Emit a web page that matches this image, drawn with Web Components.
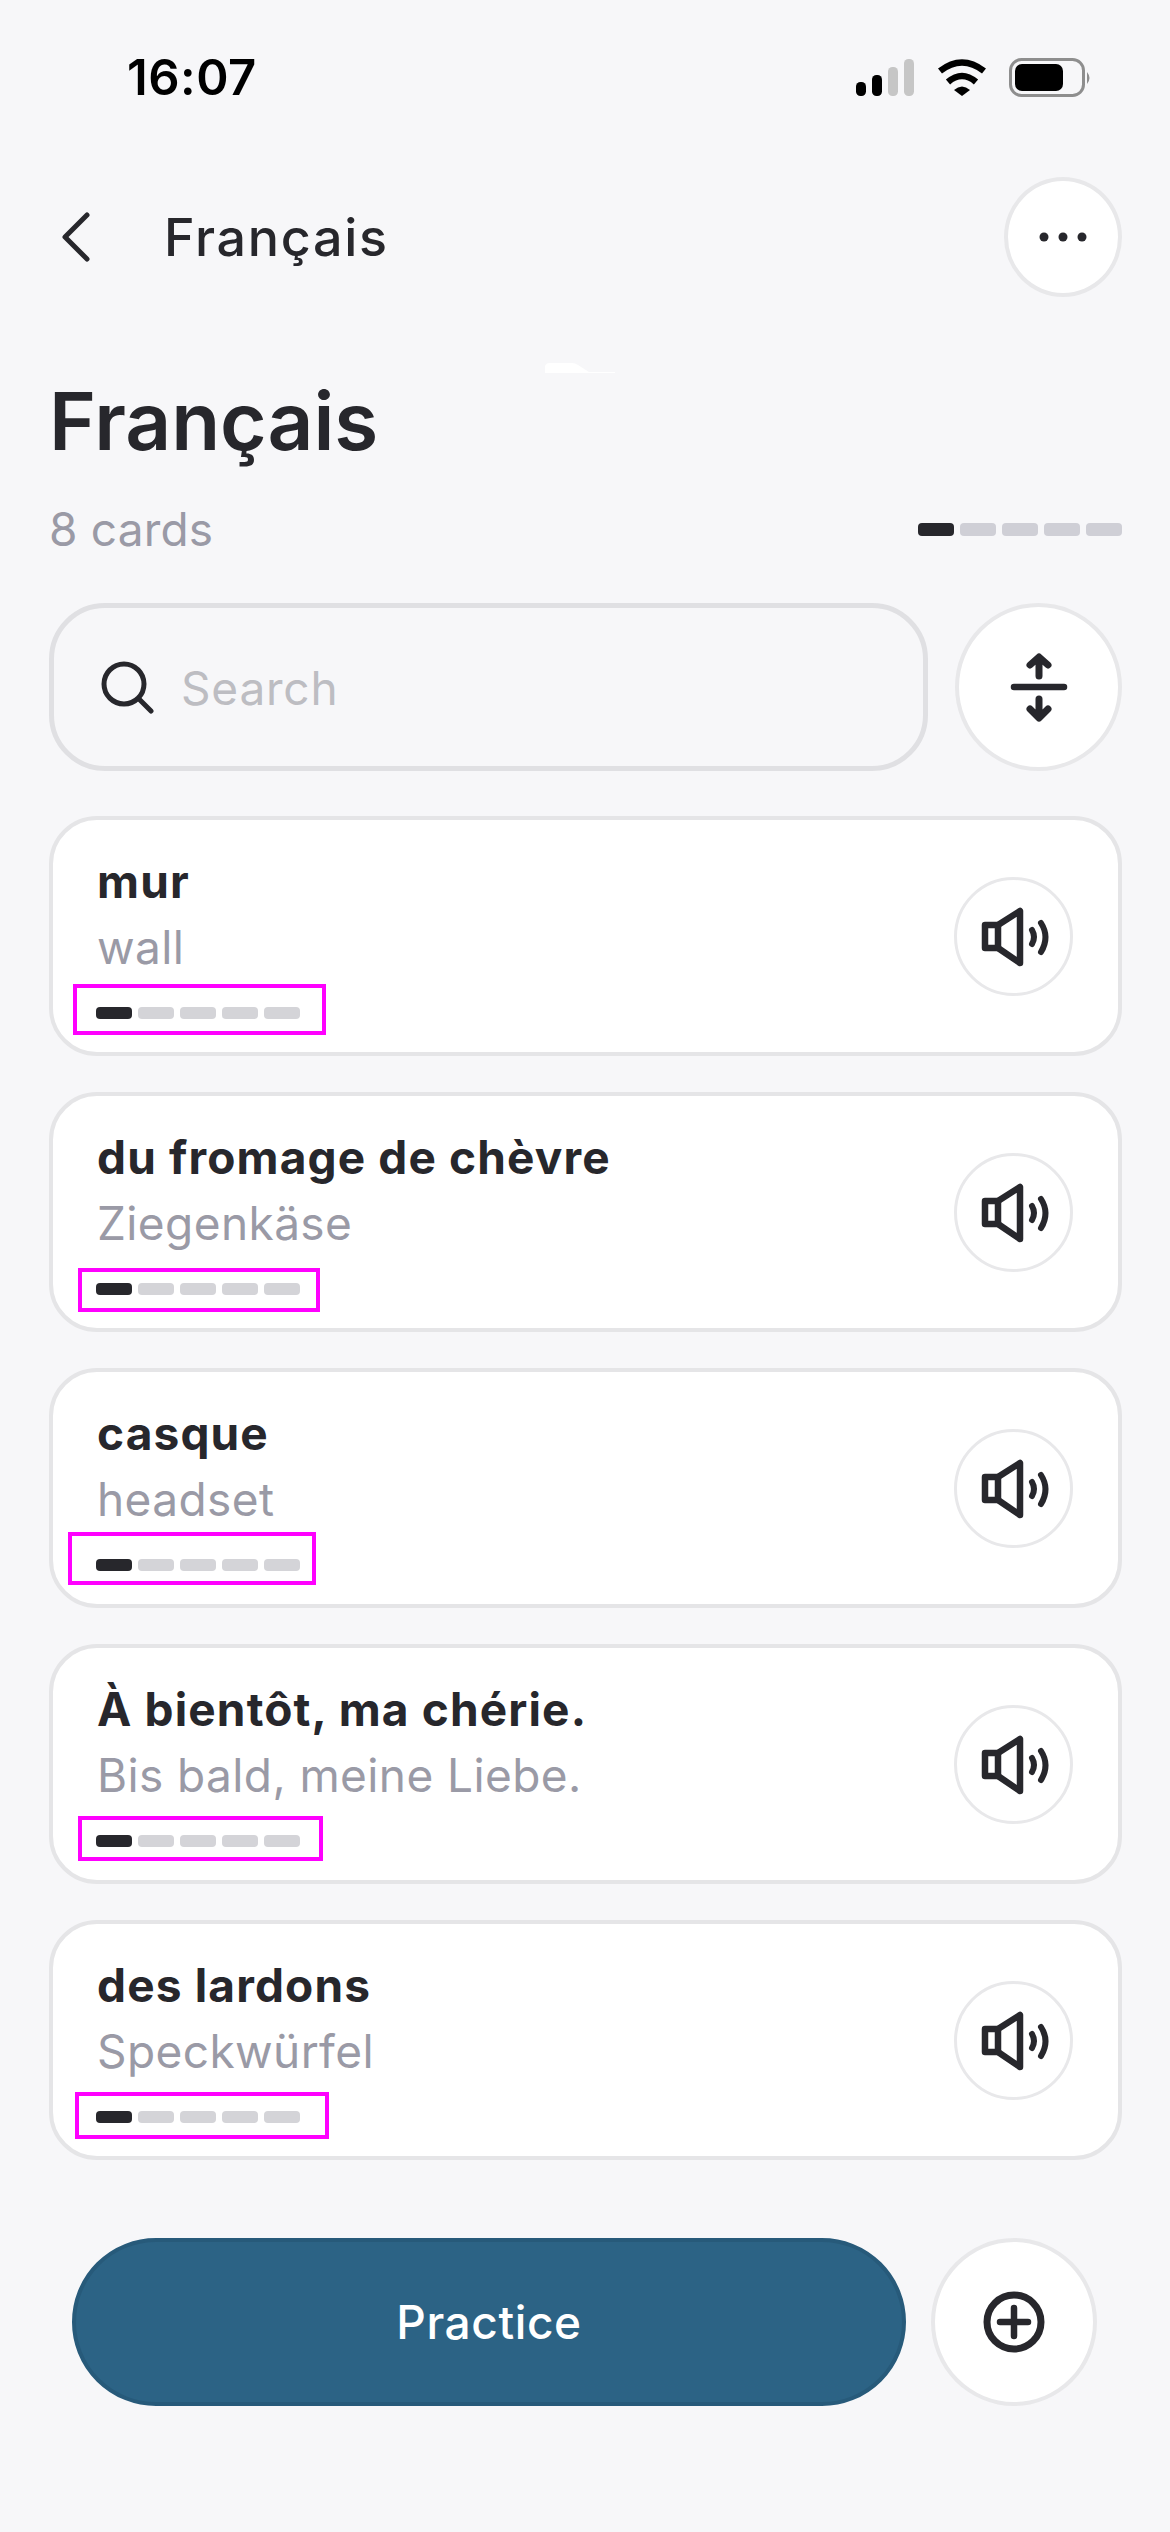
<!DOCTYPE html>
<html><head><meta charset="utf-8"><style>
html,body{margin:0;padding:0;background:#f7f7f9}
body{width:1170px;height:2532px;overflow:hidden;font-family:"Inter","Noto Sans",sans-serif;color:#27272c}
</style></head><body>
<app-screen>
  <status-bar></status-bar>
  <nav-bar title="Français"></nav-bar>
  <deck-head title="Français" count="8 cards"></deck-head>
  <search-row></search-row>
  <card-list>
    <word-card word="mur" tr="wall" mark="20,164,253,51"></word-card>
    <word-card word="du fromage de chèvre" tr="Ziegenkäse" mark="25,172,242,44"></word-card>
    <word-card word="casque" tr="headset" mark="14.500,160,248,53"></word-card>
    <word-card word="À bientôt, ma chérie." tr="Bis bald, meine Liebe." mark="25,168,245,45"></word-card>
    <word-card word="des lardons" tr="Speckwürfel" mark="22,168,254,47"></word-card>
  </card-list>
  <action-bar></action-bar>
</app-screen>
<script>
const FONT='"Inter","Noto Sans",sans-serif';
function def(name,html){customElements.define(name,class extends HTMLElement{connectedCallback(){if(this.shadowRoot)return;const r=this.attachShadow({mode:'open'});let h=html;if(typeof h==='function')h=h(this);r.innerHTML=h;}});}
def('app-screen',`<style>:host{display:block;position:relative;width:1170px;height:2532px;box-sizing:border-box}
.art{position:absolute;left:545px;top:362px}</style><slot></slot>
<svg class="art" width="72" height="12" viewBox="0 0 72 12"><path d="M0 11V5Q0 1 5 1H27Q30 1 33 3L44 10H70V11Z" fill="#fff"/></svg>`);
def('status-bar',`<style>:host{display:flex;align-items:flex-start;justify-content:space-between;height:98px;padding:50px 76px 0 127px;box-sizing:border-box}
.t{font:600 49px/56px "Inter",sans-serif;color:#000;letter-spacing:.5px}
svg{margin-top:8px;overflow:visible}</style><span class="t">16:07</span>
<svg width="238" height="40" viewBox="0 0 238 40">
<rect x="0" y="24" width="10" height="14" rx="4.500"/><rect x="16" y="17" width="10" height="21" rx="4.500"/><rect x="32" y="9" width="10" height="29" rx="4.500" fill="#c6c6c6"/><rect x="48" y="1" width="10" height="37" rx="4.500" fill="#c6c6c6"/>
<path d="M84 13Q106 -4 128 13" fill="none" stroke="#000" stroke-width="6.500"/><path d="M92 24Q106 12 120 24" fill="none" stroke="#000" stroke-width="6.500"/><path d="M98 32Q106 25 114 32L106 38Z"/>
<rect x="154.500" y="1.500" width="73" height="36" rx="11" fill="none" stroke="#8e8e8e" stroke-width="3"/><rect x="159" y="6" width="48" height="27" rx="7"/><path d="M231 14Q236 20 231 26Z" fill="#8e8e8e"/></svg>`);
def('nav-bar',t=>`<style>:host{display:flex;align-items:center;height:120px;margin:79px 48px 0 62px;justify-content:space-between}
.l{display:flex;align-items:center;gap:74px}.n{font:500 52px/60px ${FONT};color:#27272c;letter-spacing:1.700px;position:relative;top:1px}
.b{box-sizing:border-box;width:118px;height:120px;border-radius:50%;background:#fff;border:4px solid #e8e8ea;display:flex;align-items:center;justify-content:center}</style>
<div class="l"><svg width="28" height="50" viewBox="0 0 28 50"><path d="M25 3L3 25L25 47" fill="none" stroke="#27272c" stroke-width="5" stroke-linecap="round" stroke-linejoin="round"/></svg><span class="n">${t.getAttribute('title')}</span></div>
<div class="b"><svg width="48" height="10" viewBox="0 0 48 10"><circle cx="5" cy="5" r="4.500" fill="#27272c"/><circle cx="24" cy="5" r="4.500" fill="#27272c"/><circle cx="43" cy="5" r="4.500" fill="#27272c"/></svg></div>`);
def('seg-bar',t=>{const h=t.getAttribute('h')||12;return `<style>:host{display:flex;gap:6px}i{display:block;width:36px;height:${h}px;border-radius:4px;background:${t.getAttribute('off')||'#d4d4d8'}}i:first-of-type{background:#27272c}</style><i></i><i></i><i></i><i></i><i></i>`});
def('deck-head',t=>`<style>:host{display:block;margin:74px 48px 0 49px}
h1{margin:0;font:600 80px/100px ${FONT};color:#27272c}
.r{display:flex;justify-content:space-between;align-items:center;margin-top:30px}
.c{font:400 46px/56px ${FONT};color:#9a9aa6;letter-spacing:.2px}</style>
<h1>${t.getAttribute('title')}</h1><div class="r"><span class="c">${t.getAttribute('count')}</span><seg-bar h="13" off="#cfcfd6"></seg-bar></div>`);
def('search-row',`<style>:host{display:flex;gap:27px;margin:46px 48px 0 49px}
.s{flex:1;box-sizing:border-box;height:168px;border:5px solid #e0e0e3;border-radius:56px;display:flex;align-items:center;padding-left:46px;gap:27px}
.p{font:400 46px/56px ${FONT};color:#bdbdc2;letter-spacing:.8px;position:relative;top:1px}
.b{box-sizing:border-box;width:167px;height:168px;border-radius:50%;background:#fff;border:4px solid #e8e8ea;display:flex;align-items:center;justify-content:center}</style>
<div class="s"><svg width="54" height="54" viewBox="0 0 54 54"><circle cx="24" cy="24" r="20" fill="none" stroke="#27272c" stroke-width="5"/><path d="M39 39L51 51" stroke="#27272c" stroke-width="5" stroke-linecap="round"/></svg><span class="p">Search</span></div>
<div class="b"><svg width="60" height="72" viewBox="0 0 60 72"><g fill="none" stroke="#27272c" stroke-linecap="round" stroke-linejoin="round"><path d="M5 36H55" stroke-width="6.500"/><g stroke-width="7"><path d="M30 25V8M21 14L30 6L39 14"/><path d="M30 48V66M21 58L30 67L39 58"/></g></g></svg></div>`);
def('card-list',`<style>:host{display:flex;flex-direction:column;gap:36px;margin:45px 48px 0 49px}</style><slot></slot>`);
def('word-card',t=>{const m=t.getAttribute('mark').split(',').map(Number);return `<style>:host{display:flex;position:relative;box-sizing:border-box;height:240px;background:#fff;border:4px solid #e5e5e7;border-radius:48px;padding:0 45px 0 44px;justify-content:space-between;align-items:center}
.w{font:700 46px/56px ${FONT};color:#27272c;margin-top:-1px;letter-spacing:1.150px}.s{font:400 46px/56px ${FONT};color:#9a9aa6;margin-top:10px;letter-spacing:.4px}
seg-bar{margin-top:32px;margin-left:-1px}
.t{display:flex;flex-direction:column}
.b{box-sizing:border-box;width:119px;height:119px;border-radius:50%;border:3px solid #e8e8ea;display:flex;align-items:center;justify-content:center}
.m{position:absolute;box-sizing:border-box;border:4px solid #ff00ff;left:${m[0]}px;top:${m[1]}px;width:${m[2]}px;height:${m[3]}px}</style>
<div class="t"><span class="w">${t.getAttribute('word')}</span><span class="s">${t.getAttribute('tr')}</span><seg-bar></seg-bar></div>
<div class="b"><svg width="68" height="62" viewBox="0 0 68 62" style="overflow:visible"><g fill="none" stroke="#27272c" stroke-linejoin="round" stroke-linecap="round"><g stroke-width="6.500"><path d="M5 20H18L40 6V58L18 43H5Z"/><path d="M18 20V43"/></g><g stroke-width="6"><path d="M52 25Q56 32 52 39"/><path d="M61 18Q70 32 61 47"/></g></g></svg></div>
<div class="m"></div>`});
def('action-bar',`<style>:host{position:absolute;left:72px;top:2238px;display:flex;gap:25px}
.p{box-sizing:border-box;width:834px;height:168px;border-radius:84px;background:#2c6385;border:4px solid #275a7a;display:flex;align-items:center;justify-content:center;font:500 46px/56px ${FONT};color:#fff;letter-spacing:.6px}
.b{box-sizing:border-box;width:166px;height:168px;border-radius:50%;background:#fff;border:4px solid #e8e8ea;display:flex;align-items:center;justify-content:center}</style>
<div class="p">Practice</div><div class="b"><svg width="62" height="62" viewBox="0 0 62 62"><circle cx="31" cy="31" r="27" fill="none" stroke="#27272c" stroke-width="7"/><path d="M31 17V45M17 31H45" stroke="#27272c" stroke-width="6.500" stroke-linecap="round"/></svg></div>`);
</script></body></html>
